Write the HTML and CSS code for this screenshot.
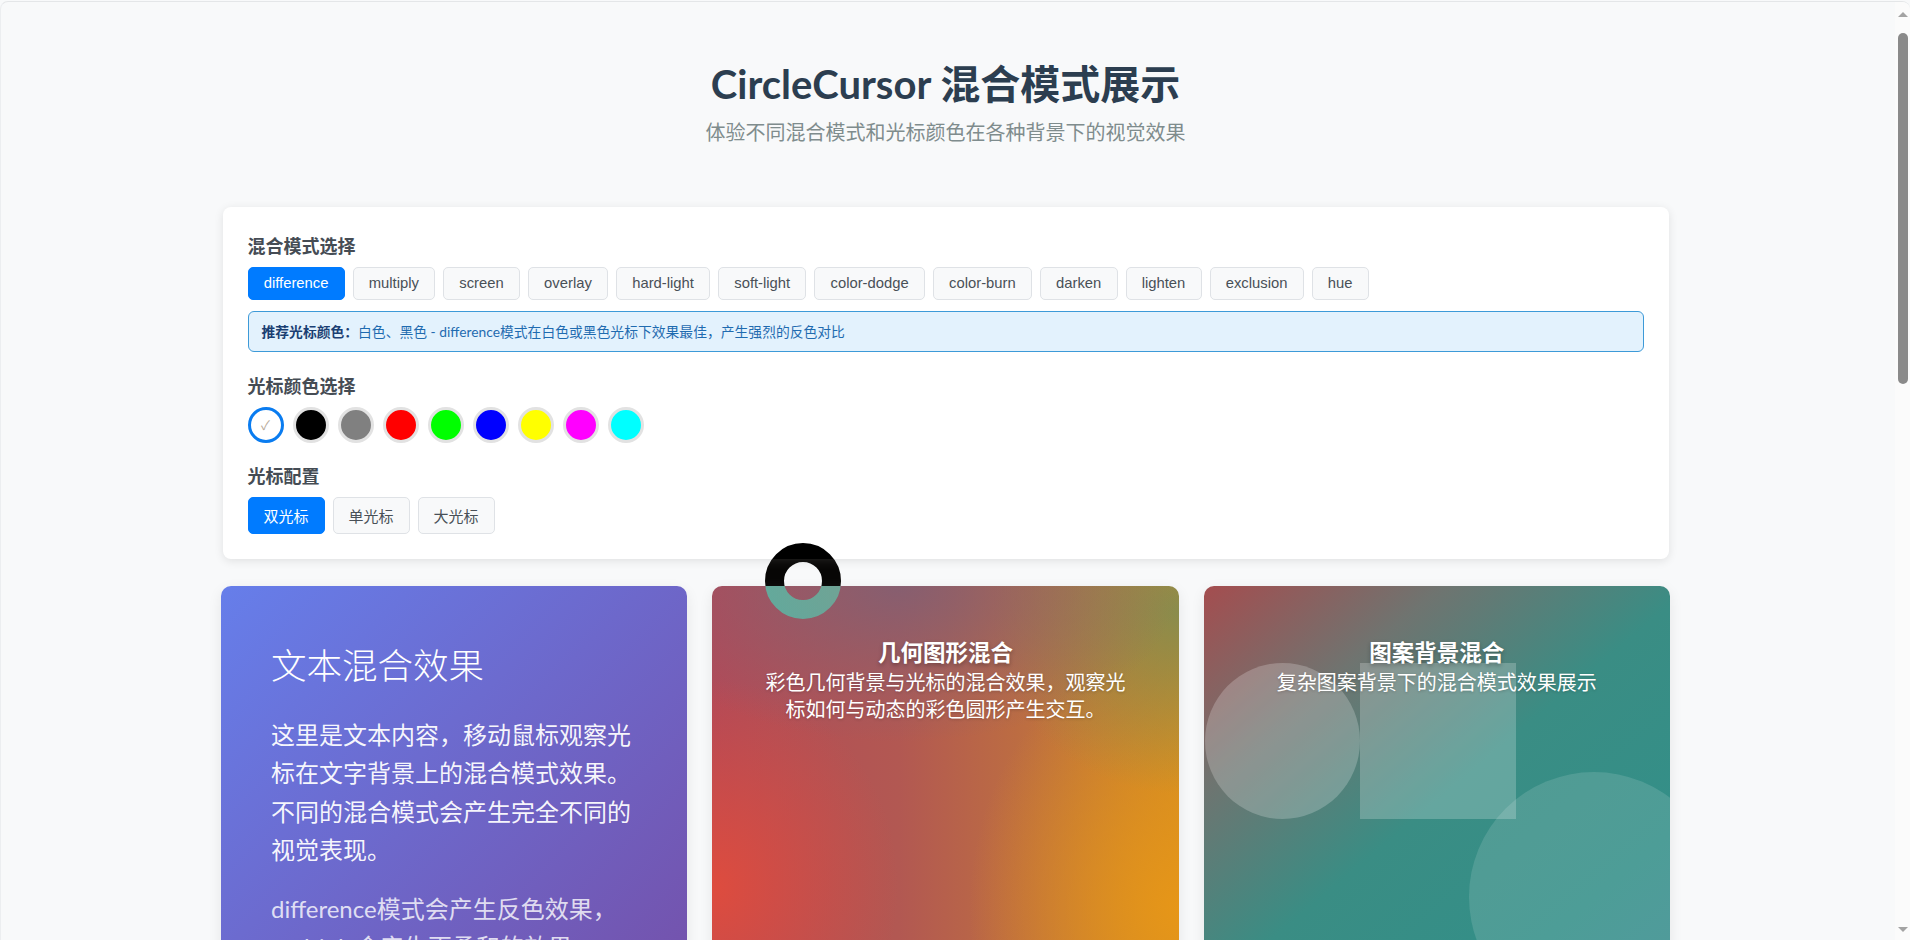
FILE: index.html
```html
<!DOCTYPE html>
<html lang="zh-CN">
<head>
<meta charset="utf-8">
<title>CircleCursor 混合模式展示</title>
<link rel="stylesheet" href="styles.css">
</head>
<body>
<div class="window">
  <div class="viewport">
    <div class="page">
      <header class="header">
        <h1 class="title">CircleCursor 混合模式展示</h1>
        <p class="subtitle">体验不同混合模式和光标颜色在各种背景下的视觉效果</p>
      </header>

      <section class="panel">
        <div class="group">
          <h3 class="label">混合模式选择</h3>
          <div class="btn-row">
            <button class="mode-btn active">difference</button>
            <button class="mode-btn">multiply</button>
            <button class="mode-btn">screen</button>
            <button class="mode-btn">overlay</button>
            <button class="mode-btn">hard-light</button>
            <button class="mode-btn">soft-light</button>
            <button class="mode-btn">color-dodge</button>
            <button class="mode-btn">color-burn</button>
            <button class="mode-btn">darken</button>
            <button class="mode-btn">lighten</button>
            <button class="mode-btn">exclusion</button>
            <button class="mode-btn">hue</button>
          </div>
          <div class="hint"><strong>推荐光标颜色：</strong>白色、黑色 - difference模式在白色或黑色光标下效果最佳，产生强烈的反色对比</div>
        </div>

        <div class="group">
          <h3 class="label">光标颜色选择</h3>
          <div class="swatches">
            <span class="swatch sw-white selected">✓</span>
            <span class="swatch sw-black"></span>
            <span class="swatch sw-gray"></span>
            <span class="swatch sw-red"></span>
            <span class="swatch sw-green"></span>
            <span class="swatch sw-blue"></span>
            <span class="swatch sw-yellow"></span>
            <span class="swatch sw-magenta"></span>
            <span class="swatch sw-cyan"></span>
          </div>
        </div>

        <div class="group last">
          <h3 class="label">光标配置</h3>
          <div class="btn-row">
            <button class="cfg-btn active">双光标</button>
            <button class="cfg-btn">单光标</button>
            <button class="cfg-btn">大光标</button>
          </div>
        </div>
      </section>

      <section class="cards">
        <article class="card card-text">
          <h2 class="card-text-title">文本混合效果</h2>
          <p class="card-text-p">这里是文本内容，移动鼠标观察光标在文字背景上的混合模式效果。不同的混合模式会产生完全不同的视觉表现。</p>
          <p class="card-text-p faded">difference模式会产生反色效果，multiply会产生更柔和的效果。</p>
        </article>

        <article class="card card-geo">
          <div class="card-center">
            <h3 class="card-title">几何图形混合</h3>
            <p class="card-sub">彩色几何背景与光标的混合效果，观察光标如何与动态的彩色圆形产生交互。</p>
          </div>
        </article>

        <article class="card card-pattern">
          <span class="shape shape-circle"></span>
          <span class="shape shape-square"></span>
          <span class="shape shape-big"></span>
          <div class="card-center">
            <h3 class="card-title">图案背景混合</h3>
            <p class="card-sub">复杂图案背景下的混合模式效果展示</p>
          </div>
        </article>
      </section>
    </div>

    <div class="scrollbar">
      <span class="sb-arrow sb-up"></span>
      <div class="sb-track"><span class="sb-thumb"></span></div>
      <span class="sb-arrow sb-down"></span>
    </div>
  </div>
  <div class="cursor-ring"></div>
</div>
</body>
</html>
```

FILE: styles.css
```css
* { box-sizing: border-box; }

html, body {
  margin: 0;
  padding: 0;
  height: 100%;
  overflow: hidden;
  background: #f8f9fa;
  font-family: Lato, "Noto Sans CJK SC", sans-serif;
}

.window {
  height: 100vh;
  border-top: 1px solid #e4e6e8;
  border-left: 1px solid #eceef0;
  border-radius: 8px 8px 0 0;
  margin-top: 1px;
  overflow: hidden;
}

.viewport {
  display: flex;
  height: 100%;
}

.page {
  flex: 1;
  min-width: 0;
  overflow: hidden;
  padding-top: 58px;
  padding-right: 5px;
}

/* header */
.header { text-align: center; }
.title {
  margin: 0;
  font-size: 40px;
  line-height: 48px;
  font-weight: 700;
  color: #2c3e50;
}
.subtitle {
  margin: 9px 0 0;
  font-size: 20px;
  line-height: 30px;
  color: #7f8c8d;
}

/* panel */
.panel {
  width: 1446px;
  margin: 60px auto 0;
  background: #fff;
  border-radius: 8px;
  box-shadow: 0 2px 10px rgba(0, 0, 0, 0.1);
  padding: 25px 25px 25px;
}
.group { margin-bottom: 19.5px; }
.group.last { margin-bottom: 0; }

.label {
  margin: 0 0 7px;
  font-size: 18px;
  line-height: 28px;
  font-weight: 700;
  color: #454c54;
}

.btn-row {
  display: flex;
  flex-wrap: wrap;
  gap: 8px;
}

.mode-btn {
  font-family: "Liberation Sans", Arial, "Noto Sans CJK SC", sans-serif;
  font-size: 14.8px;
  line-height: 17px;
  padding: 7px 15.2px;
  border: 1px solid #dfe2e6;
  border-radius: 5px;
  background: #f8f9fa;
  color: #495057;
}
.mode-btn.active,
.cfg-btn.active {
  background: #007bff;
  border-color: #007bff;
  color: #fff;
}

.hint {
  margin-top: 11px;
  padding: 9px 13px;
  border: 1px solid #3d9ad8;
  border-radius: 6px;
  background: #e3f2fd;
  color: #1f6bb0;
  font-size: 13.8px;
  line-height: 21px;
}
.hint strong { color: #1a3f73; }

.swatches {
  display: flex;
  gap: 9px;
}
.swatch {
  width: 36px;
  height: 36px;
  border-radius: 50%;
  border: 3px solid #e2e2e2;
  display: flex;
  align-items: center;
  justify-content: center;
  font-size: 13px;
  color: #b8aa9a;
}
.swatch.selected { border-color: #0a7cf0; }
.sw-white { background: #fff; }
.sw-black { background: #000; }
.sw-gray { background: #808080; }
.sw-red { background: #ff0000; }
.sw-green { background: #00ff00; }
.sw-blue { background: #0000ff; }
.sw-yellow { background: #ffff00; }
.sw-magenta { background: #ff00ff; }
.sw-cyan { background: #00ffff; }

.cfg-btn {
  font-family: "Noto Sans CJK SC", sans-serif;
  font-size: 15px;
  line-height: 21px;
  padding: 7px 15px;
  border: 1px solid #dfe2e6;
  border-radius: 5px;
  background: #f8f9fa;
  color: #495057;
}

/* cards */
.cards {
  width: 1449px;
  margin: 27px auto 0;
  display: grid;
  grid-template-columns: repeat(3, 1fr);
  gap: 25px;
}
.card {
  position: relative;
  min-height: 520px;
  border-radius: 10px;
  overflow: hidden;
  color: #fff;
  box-shadow: 0 4px 14px rgba(0, 0, 0, 0.08);
}

.card-text {
  background: linear-gradient(135deg, #667eea 0%, #764ba2 100%);
  padding: 59px 50px 40px;
}
.card-text-title {
  margin: 0 0 29px;
  font-size: 35.5px;
  line-height: 42px;
  font-weight: 300;
}
.card-text-p {
  margin: 0 0 20px;
  font-size: 24px;
  line-height: 38.4px;
  color: rgba(255, 255, 255, 0.95);
}
.card-text-p.faded { color: rgba(255, 255, 255, 0.8); }

.card-center {
  position: relative;
  padding: 52px 48px 40px;
  text-align: center;
}
.card-title {
  margin: 0;
  font-size: 22.5px;
  line-height: 30px;
  font-weight: 700;
  text-shadow: 0 2px 4px rgba(0, 0, 0, 0.3);
}
.card-sub {
  margin: 1px 0 0;
  font-size: 20px;
  line-height: 27px;
  text-shadow: 0 1px 3px rgba(0, 0, 0, 0.2);
}

.card-geo {
  background:
    radial-gradient(ellipse 60% 30% at 40% 0%, rgba(130, 95, 115, 0.9) 0%, rgba(130, 95, 115, 0) 100%),
    radial-gradient(ellipse 40% 35% at 100% 5%, rgba(130, 140, 80, 0.9) 0%, rgba(130, 140, 80, 0) 100%),
    radial-gradient(ellipse 40% 40% at 0% 58%, rgba(222, 76, 62, 1) 0%, rgba(222, 76, 62, 0) 100%),
    radial-gradient(ellipse 45% 50% at 100% 62%, rgba(230, 150, 24, 1) 0%, rgba(230, 150, 24, 0) 100%),
    linear-gradient(90deg, #b24a58 0%, #b25852 40%, #c0743c 75%, #cf8a26 100%);
}

.card-pattern {
  background: linear-gradient(140deg, #a44d4f 0%, #6f7470 22%, #3a8d84 45%, #338f88 70%, #3a8a92 100%);
}
.shape {
  position: absolute;
  background: rgba(255, 255, 255, 0.22);
}
.shape-circle {
  left: 1px;
  top: 77px;
  width: 155px;
  height: 156px;
  border-radius: 50%;
}
.shape-square {
  left: 156px;
  top: 77px;
  width: 156px;
  height: 156px;
}
.shape-big {
  left: 265px;
  top: 186px;
  width: 250px;
  height: 250px;
  border-radius: 50%;
  background: rgba(255, 255, 255, 0.13);
}

/* fake scrollbar */
.scrollbar {
  width: 15px;
  flex: none;
  background: #fbfbfb;
  display: flex;
  flex-direction: column;
  align-items: center;
}
.sb-arrow {
  width: 0;
  height: 0;
  border-left: 5px solid transparent;
  border-right: 5px solid transparent;
}
.sb-up { border-bottom: 5px solid #a3a3a3; margin-top: 10px; }
.sb-down { border-top: 5px solid #a3a3a3; margin-bottom: 9px; }
.sb-track {
  flex: 1;
  width: 100%;
  display: flex;
  justify-content: center;
  padding-top: 16px;
}
.sb-thumb {
  width: 10px;
  height: 351px;
  border-radius: 5px;
  background: #8a8a8a;
}

/* cursor overlay */
.cursor-ring {
  position: fixed;
  left: 765px;
  top: 543px;
  width: 76px;
  height: 76px;
  border-radius: 50%;
  border: 19px solid #fff;
  mix-blend-mode: difference;
  pointer-events: none;
  z-index: 10;
}
```
